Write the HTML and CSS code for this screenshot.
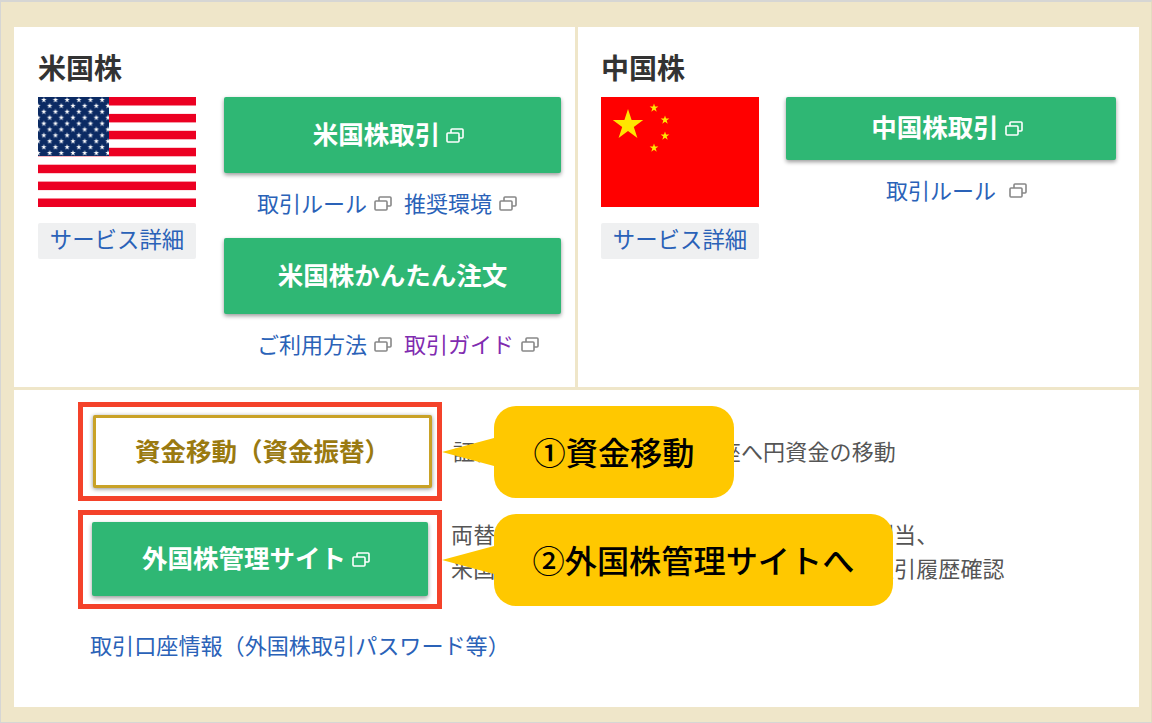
FILE: index.html
```html
<!DOCTYPE html>
<html lang="ja">
<head>
  <meta charset="utf-8">
  <title>外国株取引</title>
  <link rel="stylesheet" href="styles.css">
</head>
<body>
  <svg class="defs" width="0" height="0">
    <defs>
      <polygon id="star" points="0,-1 .225,-.309 .951,-.309 .363,.118 .588,.809 0,.382 -.588,.809 -.363,.118 -.951,-.309 -.225,-.309"/>
      <symbol id="win" viewBox="0 0 18 15">
        <rect x="1" y="5" width="12" height="9" rx="1" fill="none" stroke="currentColor" stroke-width="1.6"/>
        <path d="M5 5V2a1 1 0 0 1 1-1h10a1 1 0 0 1 1 1v7a1 1 0 0 1-1 1h-3" fill="none" stroke="currentColor" stroke-width="1.6"/>
      </symbol>
      <pattern id="stars" width="11.67" height="11.8" patternUnits="userSpaceOnUse" patternTransform="translate(2.9 0)">
        <use href="#star" transform="translate(2.9 2.95) scale(2.9)" fill="#fff"/>
        <use href="#star" transform="translate(8.75 8.85) scale(2.9)" fill="#fff"/>
      </pattern>
    </defs>
  </svg>

  <div class="frame">
    <div class="panel">
      <div class="markets">
        <section class="market market-us">
          <h2>米国株</h2>
          <div class="market-body">
            <div class="flag-col">
              <svg class="flag" viewBox="0 0 158 110">
                <rect width="158" height="110" fill="#fff"/>
                <g fill="#ec0022">
                  <rect y="0" width="158" height="8.5"/>
                  <rect y="16.9" width="158" height="8.5"/>
                  <rect y="33.8" width="158" height="8.5"/>
                  <rect y="50.8" width="158" height="8.5"/>
                  <rect y="67.7" width="158" height="8.5"/>
                  <rect y="84.6" width="158" height="8.5"/>
                  <rect y="101.5" width="158" height="8.5"/>
                </g>
                <rect width="71" height="59" fill="#0b2a63"/>
                <rect width="71" height="59" fill="url(#stars)"/>
              </svg>
              <a class="detail" href="#">サービス詳細</a>
            </div>
            <div class="action-col">
              <a class="btn btn-tall btn-ext" href="#">米国株取引<svg class="ico"><use href="#win"/></svg></a>
              <div class="links">
                <a href="#">取引ルール</a><svg class="ico"><use href="#win"/></svg>
                <a href="#">推奨環境</a><svg class="ico"><use href="#win"/></svg>
              </div>
              <a class="btn btn-tall" href="#">米国株かんたん注文</a>
              <div class="links">
                <a href="#">ご利用方法</a><svg class="ico"><use href="#win"/></svg>
                <a class="visited" href="#">取引ガイド</a><svg class="ico"><use href="#win"/></svg>
              </div>
            </div>
          </div>
        </section>

        <section class="market market-cn">
          <h2>中国株</h2>
          <div class="market-body market-body-cn">
            <div class="flag-col">
              <svg class="flag" viewBox="0 0 158 110">
                <rect width="158" height="110" fill="#ff0000"/>
                <g fill="#ffe600">
                  <use href="#star" transform="translate(27 28) scale(16)"/>
                  <use href="#star" transform="translate(53 11) scale(4.6)"/>
                  <use href="#star" transform="translate(64 23) scale(4.6)"/>
                  <use href="#star" transform="translate(64 39) scale(4.6)"/>
                  <use href="#star" transform="translate(53 51) scale(4.6)"/>
                </g>
              </svg>
              <a class="detail" href="#">サービス詳細</a>
            </div>
            <div class="action-col action-cn">
              <a class="btn btn-short btn-ext" href="#">中国株取引<svg class="ico"><use href="#win"/></svg></a>
              <div class="links links-cn">
                <a href="#">取引ルール</a><svg class="ico"><use href="#win"/></svg>
              </div>
            </div>
          </div>
        </section>
      </div>

      <div class="lower">
        <div class="row">
          <div class="mark mark-gold">
            <a class="btn btn-gold" href="#">資金移動（資金振替）</a>
          </div>
          <p class="note note-one">証券口座から外国株取引口座へ円資金の移動</p>
          <div class="callout callout-one">①資金移動</div>
        </div>
        <div class="row">
          <div class="mark mark-green">
            <a class="btn btn-site btn-ext" href="#">外国株管理サイト<svg class="ico"><use href="#win"/></svg></a>
          </div>
          <p class="note note-two">両替、外貨入出金、配当金受取、株式等の割当、<br>米国株・中国株の注文、外貨の残高照会、取引履歴確認</p>
          <div class="callout callout-two">②外国株管理サイトへ</div>
        </div>
        <a class="account" href="#">取引口座情報（外国株取引パスワード等）</a>
      </div>
    </div>
  </div>
</body>
</html>
```

FILE: styles.css
```css
/* page frame */
* {
  box-sizing: border-box;
}

body {
  margin: 0;
  font-family: "Noto Sans CJK JP", "Noto Sans", sans-serif;
  color: #555;
}

a {
  color: #2a62b8;
  text-decoration: none;
}

.defs {
  position: absolute;
}

.frame {
  width: 1152px;
  height: 723px;
  padding: 25px 12px 15px 13px;
  background-color: #efe6c9;
  border-top: 2px solid #d6d6d4;
  border-left: 1px solid #d6d6d4;
  border-right: 1px solid #e4dcc0;
  border-bottom: 1px solid #d6d6d4;
}

.panel {
  height: 100%;
  background-color: #fff;
}

/* markets */
.markets {
  display: flex;
  height: 363px;
  border-bottom: 3px solid #efe6c9;
}

.market h2 {
  margin: 0;
  height: 70px;
  line-height: 80px;
  font-size: 28px;
  font-weight: 700;
  color: #333;
}

.market-us {
  width: 564px;
  padding-left: 24px;
  border-right: 3px solid #efe6c9;
}

.market-cn {
  padding-left: 23px;
}

.market-body {
  display: flex;
  gap: 28px;
}

.market-body-cn {
  gap: 27px;
}

.flag-col {
  width: 158px;
}

.flag {
  display: block;
  width: 158px;
  height: 110px;
}

.detail {
  display: block;
  margin-top: 16px;
  height: 36px;
  line-height: 30px;
  text-align: center;
  font-size: 22.4px;
  background-color: #eff0f1;
  border-radius: 2px;
}

.action-col {
  width: 337px;
}

.action-cn {
  width: 330px;
}

/* buttons */
.btn {
  display: flex;
  align-items: center;
  justify-content: center;
  font-weight: 700;
  color: #fff;
  font-size: 25.5px;
  background-color: #2fb774;
  border-radius: 2px;
  box-shadow: 0 2px 4px rgba(0, 0, 0, .4);
}

.btn-tall {
  height: 76px;
  padding-bottom: 6px;
}

.btn-short {
  height: 63px;
  padding-bottom: 7px;
}

.btn-ext {
  padding-right: 8px;
}

.ico {
  flex: none;
  width: 18px;
  height: 15px;
  color: #888;
}

.btn .ico {
  color: #fff;
  margin: 7px 0 0 6px;
}

.links {
  display: flex;
  align-items: center;
  height: 65px;
  padding: 0 0 7px 33px;
  font-size: 22px;
}

.links .ico {
  margin: 2px 12px 0 7px;
}

.links-cn {
  height: 62px;
  padding: 0 0 4px 100px;
}

.links-cn .ico {
  margin-left: 13px;
}

.visited {
  color: #7f2bb0;
}

/* lower block */
.lower {
  padding: 12px 0 0 64px;
}

.row {
  position: relative;
  display: flex;
  align-items: center;
  height: 99px;
  margin-bottom: 9px;
}

.mark {
  flex: none;
  width: 364px;
  height: 99px;
  border: 5px solid #f4422a;
}

.mark-gold {
  padding: 8px 5px 8px 10px;
}

.mark-green {
  padding: 7px 9px 8px 9px;
}

.btn-gold {
  height: 100%;
  padding-bottom: 4px;
  color: #9a7a10;
  background-color: #fff;
  border: 3px solid #c9a227;
  box-shadow: 0 1px 4px rgba(0, 0, 0, .45);
}

.btn-site {
  height: 100%;
  padding-bottom: 6px;
}

.note {
  margin: 0 0 0 9px;
  font-size: 22px;
  line-height: 34px;
  letter-spacing: .15px;
  white-space: nowrap;
}

.note-one {
  margin: 0 0 4px 11px;
}

.note-two {
  margin-bottom: 20px;
}

/* speech bubbles over the notes */
.callout {
  position: absolute;
  left: 416px;
  top: 4px;
  height: 92px;
  display: flex;
  align-items: center;
  justify-content: center;
  padding-bottom: 2px;
  font-size: 32.2px;
  font-weight: 500;
  color: #000;
  background-color: #ffc800;
  border-radius: 22px;
}

.callout::before {
  content: "";
  position: absolute;
  left: -52px;
  top: 32px;
  border-style: solid;
  border-width: 14px 52px 14px 0;
  border-color: transparent #ffc800 transparent transparent;
}

.callout-one {
  width: 240px;
}

.callout-two {
  width: 399px;
}

.account {
  display: block;
  margin: 15px 0 0 12px;
  font-size: 22.1px;
  line-height: 40px;
}
```
